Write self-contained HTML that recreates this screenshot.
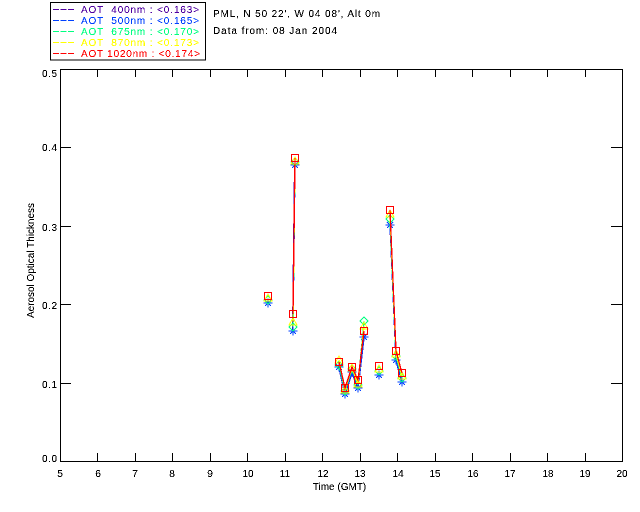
<!DOCTYPE html>
<html><head><meta charset="utf-8"><style>
html,body{margin:0;padding:0;background:#fff;width:640px;height:512px;overflow:hidden}
svg{display:block}
text{font-family:"Liberation Sans",sans-serif;font-size:10px}
</style></head><body>
<svg width="640" height="512" viewBox="0 0 640 512" xmlns="http://www.w3.org/2000/svg">
<defs>
<filter id="t" x="0" y="0" width="100%" height="100%" filterUnits="objectBoundingBox"><feComponentTransfer><feFuncA type="discrete" tableValues="0 0 1 1 1"/></feComponentTransfer></filter>
<path id="ast" d="M-4.5 0H4.5M0-4.5V4.5M-3-3L3 3M-3 3L3-3" fill="none"/>
<path id="dia" d="M0-4L4 0L0 4L-4 0Z" fill="none"/>
<path id="tri" d="M0-4L4 3H-4Z" fill="none"/>
<path id="sq" d="M-3.5-3.5H3.5V3.5H-3.5Z" fill="none"/>
</defs>
<rect width="640" height="512" fill="#fff"/>
<g shape-rendering="crispEdges">
<rect x="50.5" y="2.5" width="155" height="57.5" fill="none" stroke="#000" stroke-width="1"/>
<g stroke-width="1" stroke-dasharray="6 1.5">
<path d="M53 9.5H75" stroke="#5000a0"/>
<path d="M53 20.5H75" stroke="#0040ff"/>
<path d="M53 31.5H75" stroke="#00ff80"/>
<path d="M53 42.5H75" stroke="#ffff00"/>
<path d="M53 53.5H75" stroke="#ff0000"/>
</g>
<path fill="none" stroke="#000" stroke-width="1" d="M60.5 69.5H622.5V461.5H60.5Z
M97.5 461V453M135.5 461V453M172.5 461V453M210.5 461V453M247.5 461V453M285.5 461V453M322.5 461V453M360.5 461V453M397.5 461V453M435.5 461V453M472.5 461V453M510.5 461V453M547.5 461V453M585.5 461V453
M97.5 70V77M135.5 70V77M172.5 70V77M210.5 70V77M247.5 70V77M285.5 70V77M322.5 70V77M360.5 70V77M397.5 70V77M435.5 70V77M472.5 70V77M510.5 70V77M547.5 70V77M585.5 70V77
M61 383.5H71M61 304.5H71M61 226.5H71M61 147.5H71
M622 383.5H611M622 304.5H611M622 226.5H611M622 147.5H611"/>
</g>
<g filter="url(#t)">
<g fill="#5000a0"><text x="81" y="13" textLength="118" lengthAdjust="spacing" xml:space="preserve">AOT  400nm : &lt;0.163&gt;</text></g>
<g fill="#0040ff"><text x="81" y="24" textLength="118" lengthAdjust="spacing" xml:space="preserve">AOT  500nm : &lt;0.165&gt;</text></g>
<g fill="#00ff80"><text x="81" y="35" textLength="118" lengthAdjust="spacing" xml:space="preserve">AOT  675nm : &lt;0.170&gt;</text></g>
<g fill="#ffff00"><text x="81" y="46" textLength="118" lengthAdjust="spacing" xml:space="preserve">AOT  870nm : &lt;0.173&gt;</text></g>
<g fill="#ff0000"><text x="81" y="57" textLength="119" lengthAdjust="spacing" xml:space="preserve">AOT 1020nm : &lt;0.174&gt;</text></g>
<text x="213" y="17" textLength="167" lengthAdjust="spacing">PML, N 50 22', W 04 08', Alt 0m</text>
<text x="213" y="34" textLength="124" lengthAdjust="spacing">Data from: 08 Jan 2004</text>
<g>
<text x="42" y="77" textLength="15" lengthAdjust="spacing">0.5</text>
<text x="42" y="151" textLength="15" lengthAdjust="spacing">0.4</text>
<text x="42" y="231" textLength="15" lengthAdjust="spacing">0.3</text>
<text x="42" y="309" textLength="15" lengthAdjust="spacing">0.2</text>
<text x="42" y="388" textLength="15" lengthAdjust="spacing">0.1</text>
<text x="42" y="462" textLength="15" lengthAdjust="spacing">0.0</text>
</g>
<g text-anchor="middle">
<g style="font-size:10.5px">
<text x="60" y="477">5</text><text x="98" y="477">6</text><text x="135" y="477">7</text><text x="172" y="477">8</text><text x="210" y="477">9</text>
<text x="248" y="477">10</text><text x="285" y="477">11</text><text x="323" y="477">12</text><text x="360" y="477">13</text><text x="398" y="477">14</text><text x="435" y="477">15</text><text x="473" y="477">16</text><text x="510" y="477">17</text><text x="548" y="477">18</text><text x="585" y="477">19</text><text x="622" y="477">20</text>
</g>
<text x="339.5" y="490">Time (GMT)</text>
</g>
<text transform="translate(34,318) rotate(-90)" textLength="115" lengthAdjust="spacing">Aerosol Optical Thickness</text>
</g>
<g shape-rendering="crispEdges" fill="none" stroke-width="1.3">
<g stroke="#5000a0">
<path d="M292.6 332L294.6 166M339 368L345 395L352 373L358 389L364 338M390 226L396 361L402 383"/>
</g>
<g stroke="#0040ff">
<path d="M293 331L295 165M339 367L345 394L352 372L358 388L364 337M390 225L396 360L402 382"/>
<g stroke-width="1.2">
<use href="#ast" x="268" y="303"/><use href="#ast" x="293" y="331"/><use href="#ast" x="295" y="165"/><use href="#ast" x="339" y="367"/><use href="#ast" x="345" y="394"/><use href="#ast" x="352" y="372"/><use href="#ast" x="358" y="388"/><use href="#ast" x="364" y="337"/><use href="#ast" x="379" y="375"/><use href="#ast" x="390" y="225"/><use href="#ast" x="396" y="360"/><use href="#ast" x="402" y="382"/>
</g>
</g>
<g stroke="#00ff80">
<path d="M293 327L295 162M339 365L345 391L352 369L358 385L364 321M390 219L396 356L402 378"/>
<g stroke-width="1">
<use href="#dia" x="268" y="300"/><use href="#dia" x="293" y="327"/><use href="#dia" x="295" y="162"/><use href="#dia" x="339" y="365"/><use href="#dia" x="345" y="391"/><use href="#dia" x="352" y="369"/><use href="#dia" x="358" y="385"/><use href="#dia" x="364" y="321"/><use href="#dia" x="379" y="371"/><use href="#dia" x="390" y="219"/><use href="#dia" x="396" y="356"/><use href="#dia" x="402" y="378"/>
</g>
</g>
<g stroke="#ffff00">
<path d="M293 322L295 161M339 360L345 390L352 368L358 384L364 326M390 214L396 354L402 376"/>
<g stroke-width="1">
<use href="#tri" x="268" y="298"/><use href="#tri" x="293" y="322"/><use href="#tri" x="295" y="161"/><use href="#tri" x="339" y="360"/><use href="#tri" x="345" y="390"/><use href="#tri" x="352" y="368"/><use href="#tri" x="358" y="384"/><use href="#tri" x="364" y="326"/><use href="#tri" x="379" y="369"/><use href="#tri" x="390" y="214"/><use href="#tri" x="396" y="354"/><use href="#tri" x="402" y="376"/>
</g>
</g>
<g stroke="#ff0000">
<path d="M293 314L295 158M339 362L345 388L352 367L358 380L364 331M390 210L396 351L402 373"/>
<g stroke-width="1.4">
<use href="#sq" x="268" y="296"/><use href="#sq" x="293" y="314"/><use href="#sq" x="295" y="158"/><use href="#sq" x="339" y="362"/><use href="#sq" x="345" y="388"/><use href="#sq" x="352" y="367"/><use href="#sq" x="358" y="380"/><use href="#sq" x="364" y="331"/><use href="#sq" x="379" y="366"/><use href="#sq" x="390" y="210"/><use href="#sq" x="396" y="351"/><use href="#sq" x="402" y="373"/>
</g>
</g>
</g>
</svg>
</body></html>
